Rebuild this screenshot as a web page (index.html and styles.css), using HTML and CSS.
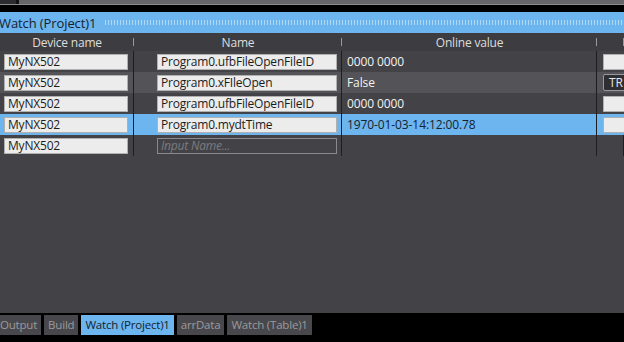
FILE: index.html
```html
<!DOCTYPE html>
<html lang="en">
<head>
    <meta charset="UTF-8">
    <title>Watch (Project)1</title>
    <link rel="stylesheet" href="styles.css">
</head>
<body>
    <div class="topstrip"><span class="grip"></span></div>
    <div class="gap"></div>

    <div class="titlebar">
        <span class="title">Watch (Project)1</span>
        <span class="dots"></span>
    </div>

    <div class="panel">
        <div class="row head">
            <div class="cell">Device name</div>
            <div class="cell">Name</div>
            <div class="cell">Online value</div>
            <div class="cell"></div>
        </div>

        <div class="row">
            <div class="cell"><span class="box">MyNX502</span></div>
            <div class="cell name"><span class="box">Program0.ufbFileOpenFileID</span></div>
            <div class="cell value">0000 0000</div>
            <div class="cell"><span class="box small"></span></div>
        </div>
        <div class="row alt">
            <div class="cell"><span class="box">MyNX502</span></div>
            <div class="cell name"><span class="box">Program0.xFIleOpen</span></div>
            <div class="cell value">False</div>
            <div class="cell"><span class="btn">TR</span></div>
        </div>
        <div class="row">
            <div class="cell"><span class="box">MyNX502</span></div>
            <div class="cell name"><span class="box">Program0.ufbFileOpenFileID</span></div>
            <div class="cell value">0000 0000</div>
            <div class="cell"><span class="box small"></span></div>
        </div>
        <div class="row selected">
            <div class="cell"><span class="box">MyNX502</span></div>
            <div class="cell name"><span class="box">Program0.mydtTime</span></div>
            <div class="cell value">1970-01-03-14:12:00.78</div>
            <div class="cell"><span class="box small"></span></div>
        </div>
        <div class="row">
            <div class="cell"><span class="box">MyNX502</span></div>
            <div class="cell name"><span class="box empty">Input Name...</span></div>
            <div class="cell value"></div>
            <div class="cell"></div>
        </div>
    </div>

    <div class="tabbar">
        <span class="tab">Output</span>
        <span class="tab">Build</span>
        <span class="tab active">Watch (Project)1</span>
        <span class="tab">arrData</span>
        <span class="tab">Watch (Table)1</span>
    </div>
</body>
</html>
```

FILE: styles.css
```css
body {
    margin: 0;
    width: 624px;
    height: 342px;
    overflow: hidden;
    display: flex;
    flex-direction: column;
    background-color: #000;
    font-family: "Open Sans", "Noto Sans", sans-serif;
    font-size: 12px;
}

/* franja superior */
.topstrip {
    height: 4px;
    background-color: #666669;
    border-bottom: 1px solid #8c8c90;
    display: flex;
}

.grip {
    width: 16px;
    background-color: #2c2c2e;
    border-right: 3px solid #111;
}

.gap {
    height: 7px;
    background-color: #000;
}

/* barra de titulo */
.titlebar {
    height: 21px;
    background-color: #6cb5ee;
    display: flex;
    align-items: center;
    gap: 8px;
}

.title {
    font-size: 13px;
    color: #16222e;
    margin-left: -1px;
    letter-spacing: -0.1px;
}

.dots {
    flex: 1;
    height: 5px;
    background-image: radial-gradient(circle, #b9dcf7 0.8px, transparent 1px);
    background-size: 3px 2.5px;
}

/* tabla */
.panel {
    flex: 1;
    background-color: #434347;
}

.row {
    display: grid;
    grid-template-columns: 134px 208px 255px 1fr;
    height: 21px;
    background-color: #434347;
}

.row .cell {
    border-right: 1px solid #1e1e20;
    display: flex;
    align-items: center;
    box-sizing: border-box;
}

.row.alt {
    background-color: #545458;
}

.row.selected {
    background-color: #6cb5ee;
}

.row.head {
    height: 18px;
    background-color: #3d3d41;
    color: #dedede;
    letter-spacing: -0.2px;
}

.row.head .cell {
    justify-content: center;
    border-right: none;
    position: relative;
}

.row.head .cell::after {
    content: "";
    position: absolute;
    right: 0;
    top: 5px;
    height: 8px;
    border-right: 1px solid #9a9a9e;
}

.box {
    height: 16px;
    box-sizing: border-box;
    width: 124px;
    margin-left: 4px;
    padding-left: 3px;
    background-color: #ececec;
    border: 1px solid #b0b0b0;
    color: #1c1c1c;
    line-height: 14px;
    white-space: nowrap;
    overflow: hidden;
    letter-spacing: -0.2px;
}

.name .box {
    width: 180px;
    margin-left: 23px;
}

.name .box.empty {
    background-color: transparent;
    border-color: #8a8a8e;
    color: #7c7c80;
    font-style: italic;
}

.value {
    color: #f2f2f2;
    padding-left: 5px;
    letter-spacing: -0.1px;
}

.selected .value {
    color: #16222e;
}

.box.small {
    width: 40px;
    margin-left: 6px;
}

.btn {
    margin-left: 6px;
    height: 17px;
    width: 40px;
    padding: 0 5px;
    box-sizing: border-box;
    background-color: #2e2e33;
    border: 1px solid #9a9aa0;
    border-radius: 2px;
    color: #e8e8e8;
    line-height: 15px;
}

/* pestanas inferiores */
.tabbar {
    height: 27px;
    background-color: #000;
    display: flex;
    align-items: flex-start;
    gap: 3px;
    padding-top: 2px;
    margin-left: -4px;
}

.tab {
    height: 20px;
    line-height: 20px;
    padding: 0 4px;
    background-color: #48484c;
    color: #9a9a9e;
    font-size: 11.5px;
    letter-spacing: -0.2px;
}

.tab.active {
    background-color: #6cb5ee;
    color: #16222e;
}
```
